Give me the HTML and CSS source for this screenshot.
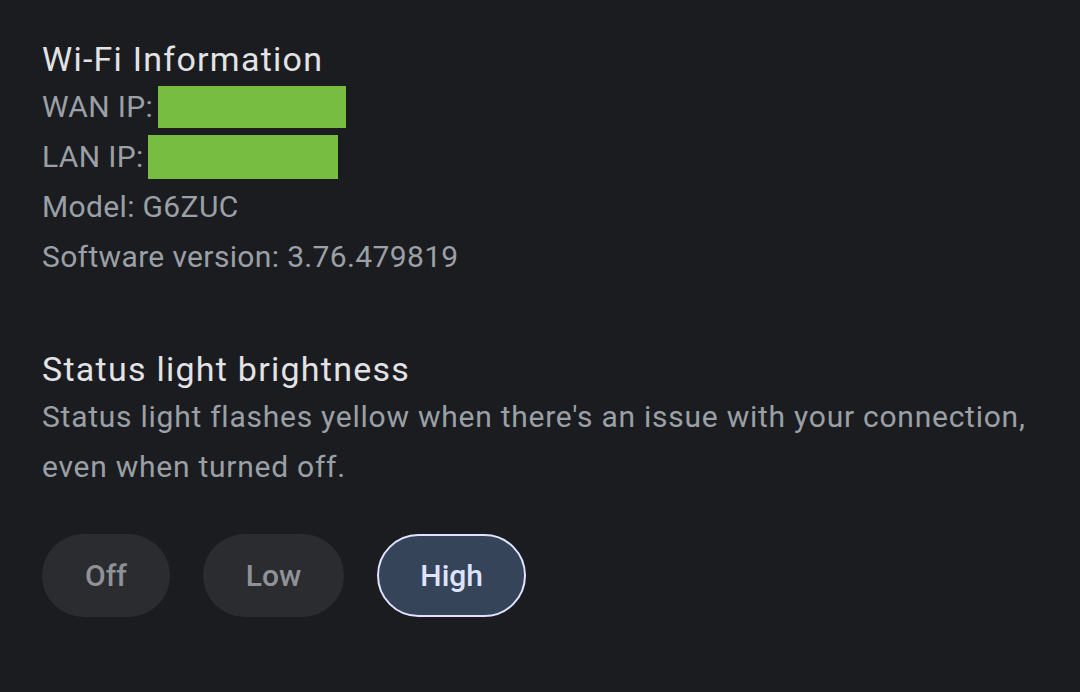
FILE: index.html
```html
<!DOCTYPE html>
<html lang="en">
<head>
    <meta charset="UTF-8">
    <meta name="viewport" content="width=device-width, initial-scale=1.0">
    <title>Wi-Fi Information</title>
    <link rel="stylesheet" href="styles.css">
</head>
<body>
    <div class="container">
        <div class="section info">
            <h2 class="title">Wi-Fi Information</h2>
            <div class="row">WAN IP:<span class="redact wan"></span></div>
            <div class="row">LAN IP:<span class="redact lan"></span></div>
            <div class="row">Model: G6ZUC</div>
            <div class="row">Software version: 3.76.479819</div>
        </div>

        <div class="section brightness">
            <h2 class="title">Status light brightness</h2>
            <p class="desc">Status light flashes yellow when there's an issue with your connection, even when turned off.</p>
            <div class="options">
                <button class="option">Off</button>
                <button class="option">Low</button>
                <button class="option selected">High</button>
            </div>
        </div>
    </div>
</body>
</html>
```

FILE: styles.css
```css
body {
    margin: 0;
    background-color: #1b1c20;
    font-family: Roboto, "Open Sans", sans-serif;
    color: #9aa0a6;
}
.container {
    padding: 36px 42px;
}
.title {
    margin: 0;
    font-size: 34px;
    font-weight: 400;
    letter-spacing: 1.25px;
    color: #e3e3e6;
    line-height: 46px;
}
.row {
    display: flex;
    align-items: center;
    font-size: 30px;
    letter-spacing: 0.35px;
    line-height: 50px;
    height: 50px;
}
.redact {
    display: inline-block;
    background-color: #77bd41;
    height: 42px;
}
.wan {
    width: 188px;
    margin-left: 5px;
}
.lan {
    width: 190px;
    height: 44px;
    margin-left: 4px;
}
.brightness {
    margin-top: 64px;
}
.desc {
    margin: 0;
    font-size: 30px;
    letter-spacing: 0.75px;
    line-height: 50px;
    max-width: 1010px;
}
.options {
    display: flex;
    gap: 33px;
    margin-top: 42px;
}
.option {
    font-family: Roboto, sans-serif;
    font-size: 30px;
    font-weight: 500;
    height: 83px;
    padding: 0 41px;
    border-radius: 42px;
    border: 2px solid transparent;
    background-color: #2b2c30;
    color: #8f9398;
}
.option.selected {
    background-color: #364459;
    border-color: #dfe3ff;
    color: #dfe3ff;
}
```
